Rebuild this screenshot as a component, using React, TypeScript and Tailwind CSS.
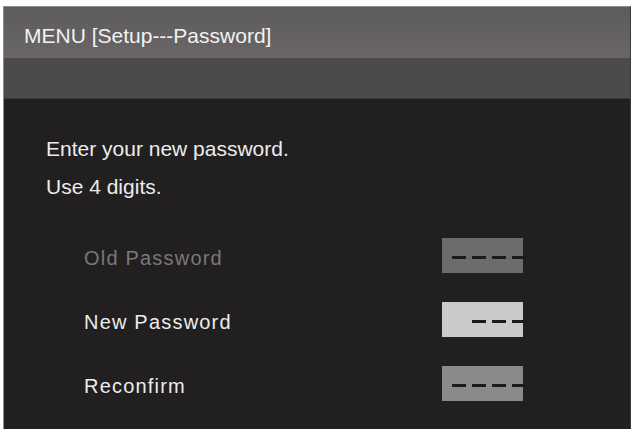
const font = { fontFamily: '"Liberation Sans", Arial, sans-serif' };

type Row = {
  label: string;
  dim?: boolean;
  box: string;
  dashes: number;
};

const rows: Row[] = [
  { label: "Old Password", dim: true, box: "bg-[#6d6c6c]", dashes: 4 },
  { label: "New Password", box: "bg-[#cacaca]", dashes: 3 },
  { label: "Reconfirm", box: "bg-[#8b8a8a]", dashes: 4 },
];

function CodeBox({ box, dashes }: { box: string; dashes: number }) {
  return (
    <div className={`flex h-[35px] w-[81px] items-start pt-[18px] ${box}`}>
      <div className="-mr-[3px] ml-auto flex gap-[6px]">
        {Array.from({ length: dashes }).map((_, i) => (
          <span key={i} className="block h-[3px] w-[14px] bg-[#1c1a1b]" />
        ))}
      </div>
    </div>
  );
}

export default function App() {
  return (
    <div
      className="h-[429px] w-[631px] overflow-hidden bg-white pl-[3px] pt-[6px]"
      style={font}
    >
      <div className="flex h-full flex-col border-l border-t border-[#8e8c8c] border-r-[#3b3939] border-r">
        <div className="h-[51px] bg-gradient-to-b from-[#5d5b5b] to-[#6a6667] pl-[20px] pt-[17px]">
          <h1 className="text-[21px] leading-[24px] text-[#f2f2f2]">
            MENU [Setup---Password]
          </h1>
        </div>
        <div className="h-[41px] border-b border-[#3a3738] bg-[#4d4a4b]" />

        <div className="flex-1 bg-[#221f20] pt-[31px]">
          <div className="pl-[42px] text-[21px] leading-[38px] text-[#ececec]">
            <p>Enter your new password.</p>
            <p>Use 4 digits.</p>
          </div>

          <div className="mt-[32px] flex flex-col gap-[26px] pl-[80px]">
            {rows.map((r) => (
              <div key={r.label} className="flex items-start">
                <span
                  className={`w-[358px] pt-[3px] text-[20px] leading-[35px] tracking-[1.2px] ${
                    r.dim ? "text-[#7a7878]" : "text-[#ececec]"
                  }`}
                >
                  {r.label}
                </span>
                <CodeBox box={r.box} dashes={r.dashes} />
              </div>
            ))}
          </div>
        </div>
      </div>
    </div>
  );
}
